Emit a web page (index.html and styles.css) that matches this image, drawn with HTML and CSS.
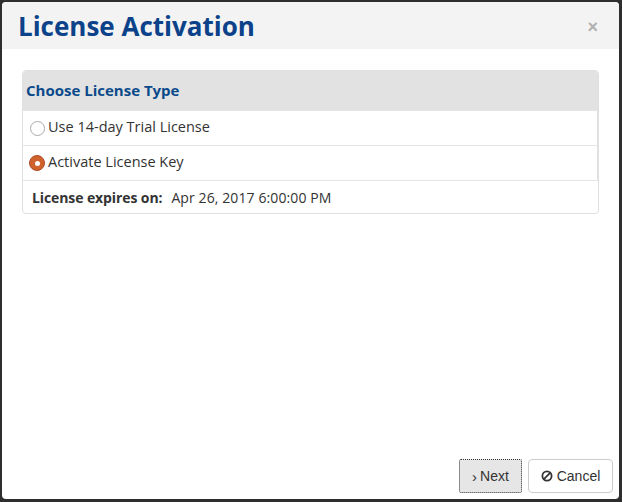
FILE: index.html
```html
<!DOCTYPE html>
<html>
<head>
<meta charset="utf-8">
<link rel="stylesheet" href="styles.css">
</head>
<body>
<div class="dialog">
  <div class="dialog-header">
    <h1 class="title">License Activation</h1>
    <span class="close">×</span>
  </div>
  <div class="dialog-body">
    <div class="panel">
      <div class="panel-heading">Choose License Type</div>
      <div class="options">
        <label class="option"><span class="radio"></span>Use 14-day Trial License</label>
        <label class="option"><span class="radio checked"></span>Activate License Key</label>
      </div>
      <div class="expires">
        <span class="exp-label">License expires on:</span>
        <span class="exp-value">Apr 26, 2017 6:00:00 PM</span>
      </div>
    </div>
  </div>
  <div class="dialog-footer">
    <button class="btn btn-next"><span class="chev">›</span> Next</button>
    <button class="btn btn-cancel"><svg class="ban" viewBox="0 0 12 12" width="12" height="12"><circle cx="6" cy="6" r="4.6" fill="none" stroke="#333" stroke-width="1.8"/><line x1="2.9" y1="9.1" x2="9.1" y2="2.9" stroke="#333" stroke-width="1.8"/></svg> Cancel</button>
  </div>
</div>
</body>
</html>
```

FILE: styles.css
```css
html, body {
  margin: 0;
  padding: 0;
  height: 100%;
}
body {
  background: #2e2e2e;
  font-family: "Open Sans", sans-serif;
  padding: 2px 3px 3px 2px;
  box-sizing: border-box;
}
.dialog {
  background: #fff;
  border-radius: 4px;
  height: 100%;
  display: flex;
  flex-direction: column;
  overflow: hidden;
}
.dialog-header {
  background: #f3f3f3;
  height: 47px;
  display: flex;
  align-items: center;
  justify-content: space-between;
  padding: 0 21px 0 16px;
}
.title {
  margin: 0;
  font-size: 26px;
  font-weight: 700;
  color: #0b428a;
}
.close {
  font-family: "Liberation Sans", sans-serif;
  font-weight: 700;
  font-size: 18px;
  color: #b0b0b0;
  margin-top: 4px;
}
.dialog-body {
  flex: 1;
  padding: 21px 20px 0 20px;
}
.panel {
  border: 1px solid #e0e0e0;
  border-radius: 4px;
  overflow: hidden;
}
.panel-heading {
  background: #e2e2e2;
  height: 39px;
  line-height: 38px;
  padding-left: 3px;
  font-size: 15px;
  font-weight: 700;
  color: #0b4a8a;
}
.options {
  border-right: 1px solid #e0e0e0;
}
.option {
  display: flex;
  align-items: center;
  border-top: 1px solid #e5e5e5;
  padding-left: 7px;
  padding-bottom: 3px;
  box-sizing: content-box;
  height: 31px;
  font-size: 14.5px;
  color: #333;
}
.radio {
  width: 13px;
  height: 13px;
  border: 1px solid #a9a9a9;
  border-radius: 50%;
  margin-right: 3px;
  margin-top: 3px;
  box-sizing: content-box;
  background: #fff;
  position: relative;
}
.radio.checked {
  width: 14px;
  height: 14px;
  margin-left: -1px;
  margin-right: 3px;
  border-color: #b04a22;
  background: #d0622e;
}
.radio.checked::after {
  content: "";
  position: absolute;
  left: 4.5px;
  top: 4.5px;
  width: 5px;
  height: 5px;
  background: #fff;
  border-radius: 50%;
}
.expires {
  height: 32px;
  border-top: 1px solid #e5e5e5;
  display: flex;
  align-items: center;
  padding-left: 9px;
  font-size: 14px;
  color: #333;
}
.exp-label {
  font-weight: 700;
  letter-spacing: -0.1px;
  margin-right: 9px;
}
.exp-value {
  letter-spacing: 0.1px;
}
.dialog-footer {
  display: flex;
  justify-content: flex-end;
  gap: 6px;
  padding: 0 6px 6px 0;
}
.btn {
  height: 34px;
  font-family: "Liberation Sans", sans-serif;
  font-size: 14px;
  color: #333;
  border-radius: 4px;
  display: flex;
  align-items: center;
  gap: 4px;
}
.btn-next {
  background: #e6e6e6;
  border: 1px dotted #333;
  border-radius: 2px;
  width: 63px;
  justify-content: center;
  padding: 0;
}
.btn-cancel {
  background: #fff;
  border: 1px solid #cccccc;
  width: 85px;
  justify-content: center;
  padding: 0;
}
.chev {
  font-size: 15px;
  margin-right: -1px;
}
.ban {
  display: block;
}
```
